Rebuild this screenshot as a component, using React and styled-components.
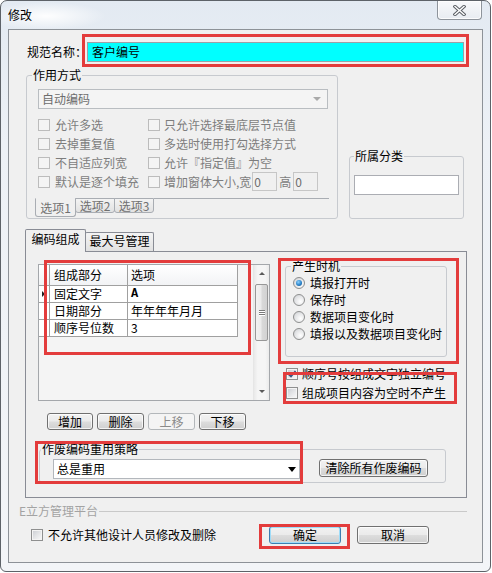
import React from "react";
import styled, { createGlobalStyle } from "styled-components";

const FONT = `"Noto Sans CJK SC", "Noto Sans", "DejaVu Sans", sans-serif`;

const GlobalStyle = createGlobalStyle`
  *, *::before, *::after { box-sizing: border-box; }
  html, body { margin: 0; padding: 0; background: #ffffff; }
  body { font-family: ${FONT}; font-size: 12px; line-height: 14px; color: #000; }
`;

const Window = styled.div`
  position: relative;
  width: 491px;
  height: 572px;
  border: 1px solid #5d6268;
  border-radius: 7px 7px 6px 6px;
  background:
    radial-gradient(ellipse 60px 14px at 45px 15px, rgba(255,255,255,0.95), rgba(255,255,255,0) 100%),
    linear-gradient(180deg, #e3eaf2 0%, #edf1f6 25%, #f3f5f8 100%);
  padding: 0 7px;
  display: flex;
  flex-direction: column;
  overflow: hidden;
`;

const TitleBar = styled.div`
  height: 28px;
  flex: none;
  display: flex;
  justify-content: space-between;
  align-items: flex-start;
`;

const Title = styled.div`
  padding-top: 7px;
  line-height: 14px;
  font-size: 12px;
  color: #000;
`;

const CloseBtn = styled.div`
  width: 45px;
  height: 19px;
  margin-right: 1px;
  border: 1px solid #8e949b;
  border-top: none;
  border-radius: 0 0 4px 4px;
  background: linear-gradient(180deg, #f8f9fb, #e8ecf1);
  box-shadow: inset 0 0 0 1px rgba(255,255,255,0.8);
  display: flex;
  align-items: center;
  justify-content: center;
`;

const Client = styled.div`
  height: 534px;
  flex: none;
  border: 1px solid #8d9298;
  background: #f0f0f0;
  display: flex;
  flex-direction: column;
`;

const NameRow = styled.div`
  display: flex;
  align-items: center;
  height: 20px;
  margin: 12px 0 0 18px;
`;

const FieldLabel = styled.span`
  width: 60px;
  flex: none;
  white-space: nowrap;
`;

const NameInput = styled.div`
  width: 377px;
  height: 20px;
  flex: none;
  background: #00ffff;
  border: 1px solid #9aa0a6;
  padding: 2px 4px;
  line-height: 14px;
`;

const TopRow = styled.div`
  display: flex;
  align-items: flex-end;
  margin: 6px 0 0 17px;
`;

const Group = styled.fieldset`
  margin: 0;
  min-width: 0;
  flex: none;
  width: ${(p) => p.$w}px;
  border: 1px solid #c7cacf;
  border-radius: 3px;
  padding: ${(p) => p.$pad};
`;

const CategoryGroup = styled(Group)`
  margin-left: 11px;
`;

const PolicyGroup = styled(Group)`
  margin: 12px 0 0 1px;
`;

const Legend = styled.legend`
  padding: 0 1px;
  margin-left: ${(p) => p.$ml}px;
  font-size: 12px;
  line-height: 14px;
  color: #000;
`;

const Combo = styled.div`
  width: ${(p) => p.$w}px;
  height: 20px;
  flex: none;
  display: flex;
  align-items: center;
  justify-content: space-between;
  padding: 0 ${(p) => (p.$disabled ? 6 : 3)}px 0 3px;
  border: 1px solid ${(p) => (p.$disabled ? "#b9bdc1" : "#b3b7bc")};
  background: ${(p) => (p.$disabled ? "#f4f4f4" : "#ffffff")};
  color: ${(p) => (p.$disabled ? "#6d6d6d" : "#000")};
  white-space: nowrap;
`;

const ComboArrow = styled.span`
  width: 0;
  height: 0;
  border-left: 4px solid transparent;
  border-right: 4px solid transparent;
  border-top: ${(p) => (p.$disabled ? "4px solid #a9a9a9" : "5px solid #000")};
`;

const CheckGrid = styled.div`
  display: grid;
  grid-template-columns: 110px auto;
  grid-auto-rows: 19px;
  margin-top: 6px;
`;

const CheckItem = styled.div`
  display: flex;
  align-items: center;
  height: ${(p) => p.$h || 19}px;
  gap: ${(p) => p.$gap ?? 5}px;
  margin-left: ${(p) => p.$ml || 0}px;
  white-space: nowrap;
  color: ${(p) => (p.$disabled ? "#7d7d7d" : "#000")};
`;

const Box = styled.span`
  width: 12px;
  height: 12px;
  flex: none;
  display: flex;
  align-items: center;
  justify-content: center;
  border: 1px solid ${(p) => (p.$disabled ? "#bcbcbc" : "#8e8f8f")};
  background: ${(p) =>
    p.$disabled
      ? "#f4f4f4"
      : "linear-gradient(135deg, #c9ccd1 0%, #e6e7e9 55%, #fafafa 100%)"};
  box-shadow: ${(p) => (p.$disabled ? "none" : "inset 0 0 0 1px #f4f4f4")};
`;

const MiniInput = styled.span`
  width: 25px;
  height: 19px;
  flex: none;
  margin-left: 1px;
  border: 1px solid #c6c6c6;
  background: #f0f0f0;
  padding: 2px 1px;
  line-height: 14px;
  color: #6d6d6d;
`;

const SizeText = styled.span`
  display: flex;
  align-items: center;
`;

const HighLabel = styled.span`
  margin: 0 1px 0 2px;
`;

const BottomTabStrip = styled.div`
  display: flex;
  align-items: flex-start;
  width: 294px;
  height: 19px;
  margin: 7px 0 0 -3px;
`;

const BottomTab = styled.span`
  width: ${(p) => p.$w}px;
  height: ${(p) => (p.$active ? 19 : 15)}px;
  flex: none;
  margin-left: ${(p) => (p.$first ? 0 : -1)}px;
  border: 1px solid #a9adb3;
  border-top-color: ${(p) => (p.$active ? "transparent" : "#a9adb3")};
  border-radius: 0 0 3px 3px;
  background: ${(p) => (p.$active ? "#f0f0f0" : "linear-gradient(180deg, #f3f3f3, #e2e2e2)")};
  color: #707070;
  display: flex;
  align-items: ${(p) => (p.$active ? "center" : "flex-start")};
  justify-content: center;
  line-height: 13px;
`;

const StripLine = styled.span`
  flex: 1;
  border-top: 1px solid #a9adb3;
`;

const CategoryInput = styled.div`
  width: 105px;
  height: 20px;
  border: 1px solid #abadb3;
  background: #fff;
`;

const TabBox = styled.div`
  width: 442px;
  margin: 10px 0 0 16px;
  display: flex;
  flex-direction: column;
`;

const TabHeads = styled.div`
  display: flex;
  align-items: flex-end;
  height: 22px;
  position: relative;
  z-index: 1;
`;

const TopTab = styled.div`
  width: ${(p) => p.$w}px;
  height: ${(p) => (p.$active ? 23 : 19)}px;
  flex: none;
  margin-bottom: ${(p) => (p.$active ? -1 : 0)}px;
  margin-left: ${(p) => (p.$active ? 0 : -1)}px;
  padding-top: ${(p) => (p.$active ? 2 : 1)}px;
  border: 1px solid #898c95;
  border-bottom: none;
  border-radius: 2px 2px 0 0;
  background: ${(p) => (p.$active ? "#f0f0f0" : "linear-gradient(180deg, #f4f4f4, #e1e1e1)")};
  text-align: center;
  line-height: 14px;
  white-space: nowrap;
`;

const TabPanel = styled.div`
  height: 247px;
  border: 1px solid #898c95;
  background: #f0f0f0;
  padding: 7px 0 0 12px;
  display: flex;
  flex-direction: column;
`;

const PanelTop = styled.div`
  display: flex;
  align-items: flex-start;
`;

const LeftCol = styled.div`
  width: 232px;
  flex: none;
  margin-top: 5px;
  display: flex;
  flex-direction: column;
`;

const GridBox = styled.div`
  width: 232px;
  height: 137px;
  border: 1px solid #a4a7ab;
  display: flex;
`;

const TableArea = styled.div`
  flex: 1;
  background: #f4f4f4;
`;

const Table = styled.div`
  display: grid;
  grid-template-columns: 11px 78px 110px;
  grid-template-rows: 21px 17px 17px 17px;
  width: 199px;
`;

const HeadCell = styled.div`
  display: flex;
  align-items: center;
  padding-left: ${(p) => p.$pl ?? 4}px;
  background: linear-gradient(180deg, #ffffff, #f2f3f5);
  border-right: 1px solid #a0a0a0;
  border-bottom: 1px solid #a0a0a0;
  white-space: nowrap;
`;

const Cell = styled.div`
  display: flex;
  align-items: center;
  padding-left: ${(p) => p.$pl ?? 4}px;
  background: #ffffff;
  border-right: 1px solid #a0a0a0;
  border-bottom: 1px solid #a0a0a0;
  white-space: nowrap;
  overflow: hidden;
  font-family: ${(p) => (p.$mono ? `"Liberation Mono", monospace` : FONT)};
  font-weight: ${(p) => (p.$mono ? 700 : 400)};
`;

const RowHead = styled.div`
  display: flex;
  align-items: center;
  padding-left: 3px;
  background: #ffffff;
  border-right: 1px solid #a0a0a0;
  border-bottom: 1px solid #a0a0a0;
`;

const RowMarker = styled.span`
  width: 0;
  height: 0;
  border-top: 3px solid transparent;
  border-bottom: 3px solid transparent;
  border-left: 3px solid #222;
`;

const VScroll = styled.div`
  width: 16px;
  flex: none;
  display: flex;
  flex-direction: column;
  border-left: 1px solid #e6e6e6;
  background: linear-gradient(90deg, #e9e9e9, #f5f5f5 25%, #f5f5f5 75%, #ebebeb);
`;

const ScrollArrow = styled.div`
  height: 17px;
  flex: none;
  display: flex;
  align-items: center;
  justify-content: center;
  margin-top: ${(p) => (p.$bottom ? "auto" : 0)};
`;

const ArrowGlyph = styled.span`
  width: 0;
  height: 0;
  border-left: 3px solid transparent;
  border-right: 3px solid transparent;
  ${(p) => (p.$down ? "border-top: 3px solid #5a5a5a;" : "border-bottom: 3px solid #5a5a5a;")}
`;

const Thumb = styled.div`
  height: 57px;
  margin: 2px 1px 0 1px;
  border: 1px solid #979797;
  border-radius: 2px;
  background: linear-gradient(90deg, #f2f2f2, #ebebeb 45%, #d9d9d9 55%, #d2d2d2);
  display: flex;
  flex-direction: column;
  align-items: center;
  justify-content: center;
  gap: 1px;
`;

const Grip = styled.span`
  width: 6px;
  height: 1px;
  background: #7a7a7a;
  box-shadow: 0 1px 0 #fff;
`;

const ButtonRow = styled.div`
  display: flex;
  gap: 4px;
  margin: 12px 0 0 9px;
`;

const Btn = styled.button`
  font-family: ${FONT};
  font-size: 12px;
  line-height: 14px;
  padding: 0;
  width: ${(p) => p.$w}px;
  height: ${(p) => p.$h}px;
  flex: none;
  border: 1px solid ${(p) => (p.$disabled ? "#b3b7ba" : p.$focus ? "#3c7fb1" : "#707070")};
  border-radius: 3px;
  background: ${(p) =>
    p.$disabled
      ? "#f4f4f4"
      : "linear-gradient(180deg, #f2f2f2 0%, #ebebeb 48%, #dddddd 52%, #cfcfcf 100%)"};
  box-shadow: ${(p) =>
    p.$focus
      ? "inset 0 0 0 1px #9fdcf8"
      : p.$disabled
      ? "none"
      : "inset 0 0 0 1px rgba(255,255,255,0.75)"};
  color: ${(p) => (p.$disabled ? "#8a8a8a" : "#000")};
  white-space: nowrap;
`;

const RightCol = styled.div`
  width: 162px;
  flex: none;
  margin-left: 15px;
  display: flex;
  flex-direction: column;
`;

const RadioItem = styled.div`
  display: flex;
  align-items: center;
  gap: 5px;
  height: 17px;
  white-space: nowrap;
`;

const Radio = styled.span`
  width: 12px;
  height: 12px;
  flex: none;
  border-radius: 50%;
  border: 1px solid #8e8f8f;
  background: radial-gradient(circle at 65% 65%, #ffffff 0%, #e4e5e7 55%, #c8cbcf 100%);
  display: flex;
  align-items: center;
  justify-content: center;
`;

const RadioDot = styled.span`
  width: 6px;
  height: 6px;
  border-radius: 50%;
  background: radial-gradient(circle at 40% 35%, #8cd1ff 0%, #2a82c8 55%, #0c4a86 100%);
`;

const CheckStack = styled.div`
  margin-top: 7px;
  display: flex;
  flex-direction: column;
`;

const PolicyRow = styled.div`
  display: flex;
  align-items: flex-start;
  gap: 19px;
`;

const SepRow = styled.div`
  display: flex;
  align-items: center;
  height: 14px;
  margin: 6px 15px 0 10px;
  color: #a3a3a3;
  white-space: nowrap;
`;

const SepLine = styled.span`
  flex: 1;
  height: 1px;
  margin-left: 1px;
  background: #c9c9c9;
`;

const FooterRow = styled.div`
  display: flex;
  align-items: center;
  height: 18px;
  margin-top: 8px;
  padding-left: 22px;
`;

const FooterButtons = styled.div`
  display: flex;
  gap: 16px;
  margin: 0 53px 0 auto;
`;

const Mark = styled.div`
  position: absolute;
  left: ${(p) => p.$x - 1}px;
  top: ${(p) => p.$y - 1}px;
  width: ${(p) => p.$w}px;
  height: ${(p) => p.$h}px;
  border: 3px solid #e33c3c;
  pointer-events: none;
`;

const CheckMark = () => (
  <svg width="10" height="10" viewBox="0 0 10 10">
    <path d="M1.5 5 L4 7.5 L8.5 2" fill="none" stroke="#3b5582" strokeWidth="1.8" />
  </svg>
);

const Check = ({ label, disabled, checked, gap, ml, h }) => (
  <CheckItem $disabled={disabled} $gap={gap} $ml={ml} $h={h}>
    <Box $disabled={disabled}>{checked && <CheckMark />}</Box>
    <span>{label}</span>
  </CheckItem>
);

const CloseX = () => (
  <svg width="13" height="11" viewBox="0 0 13 11">
    <path d="M2 1.5 L11 9.5 M11 1.5 L2 9.5" stroke="#5d6167" strokeWidth="3.4" strokeLinecap="square" />
    <path d="M2 1.5 L11 9.5 M11 1.5 L2 9.5" stroke="#ffffff" strokeWidth="1.4" strokeLinecap="square" />
  </svg>
);

const rows = [
  { a: "固定文字", b: "A", mono: true, marker: true },
  { a: "日期部分", b: "年年年年月月" },
  { a: "顺序号位数", b: "3" },
];

export default function App() {
  return (
    <>
      <GlobalStyle />
      <Window>
        <TitleBar>
          <Title>修改</Title>
          <CloseBtn>
            <CloseX />
          </CloseBtn>
        </TitleBar>
        <Client>
          <NameRow>
            <FieldLabel>规范名称：</FieldLabel>
            <NameInput>客户编号</NameInput>
          </NameRow>

          <TopRow>
            <Group $w={312} $pad="7px 8px 1px 11px">
              <Legend $ml={-6}>作用方式</Legend>
              <Combo $w={290} $disabled>
                <span>自动编码</span>
                <ComboArrow $disabled />
              </Combo>
              <CheckGrid>
                <Check disabled label="允许多选" />
                <Check disabled label="只允许选择最底层节点值" gap={4} />
                <Check disabled label="去掉重复值" />
                <Check disabled label="多选时使用打勾选择方式" gap={4} />
                <Check disabled label="不自适应列宽" />
                <Check disabled label="允许『指定值』为空" gap={4} />
                <Check disabled label="默认是逐个填充" />
                <CheckItem $disabled $gap={4}>
                  <Box $disabled />
                  <SizeText>
                    增加窗体大小,宽
                    <MiniInput>0</MiniInput>
                    <HighLabel>高</HighLabel>
                    <MiniInput>0</MiniInput>
                  </SizeText>
                </CheckItem>
              </CheckGrid>
              <BottomTabStrip>
                <BottomTab $w={41} $active $first>选项1</BottomTab>
                <BottomTab $w={40}>选项2</BottomTab>
                <BottomTab $w={40}>选项3</BottomTab>
                <StripLine />
              </BottomTabStrip>
            </Group>

            <CategoryGroup $w={115} $pad="12px 4px 23px 4px">
              <Legend $ml={0}>所属分类</Legend>
              <CategoryInput />
            </CategoryGroup>
          </TopRow>

          <TabBox>
            <TabHeads>
              <TopTab $w={61} $active>编码组成</TopTab>
              <TopTab $w={69}>最大号管理</TopTab>
            </TabHeads>
            <TabPanel>
              <PanelTop>
                <LeftCol>
                  <GridBox>
                    <TableArea>
                      <Table>
                        <HeadCell $pl={0} />
                        <HeadCell>组成部分</HeadCell>
                        <HeadCell $pl={3}>选项</HeadCell>
                        {rows.map((r) => (
                          <React.Fragment key={r.a}>
                            <RowHead>{r.marker && <RowMarker />}</RowHead>
                            <Cell>{r.a}</Cell>
                            <Cell $pl={3} $mono={r.mono}>
                              {r.b}
                            </Cell>
                          </React.Fragment>
                        ))}
                      </Table>
                    </TableArea>
                    <VScroll>
                      <ScrollArrow>
                        <ArrowGlyph />
                      </ScrollArrow>
                      <Thumb>
                        <Grip />
                        <Grip />
                        <Grip />
                      </Thumb>
                      <ScrollArrow $bottom>
                        <ArrowGlyph $down />
                      </ScrollArrow>
                    </VScroll>
                  </GridBox>
                  <ButtonRow>
                    <Btn $w={46} $h={17}>增加</Btn>
                    <Btn $w={47} $h={17}>删除</Btn>
                    <Btn $w={47} $h={17} $disabled>上移</Btn>
                    <Btn $w={47} $h={17}>下移</Btn>
                  </ButtonRow>
                </LeftCol>

                <RightCol>
                  <Group $w={162} $pad="1px 0 14px 7px">
                    <Legend $ml={-2}>产生时机</Legend>
                    <RadioItem>
                      <Radio>
                        <RadioDot />
                      </Radio>
                      填报打开时
                    </RadioItem>
                    <RadioItem>
                      <Radio />
                      保存时
                    </RadioItem>
                    <RadioItem>
                      <Radio />
                      数据项目变化时
                    </RadioItem>
                    <RadioItem>
                      <Radio />
                      填报以及数据项目变化时
                    </RadioItem>
                  </Group>
                  <CheckStack>
                    <Check checked label="顺序号按组成文字独立编号" gap={4} ml={1} />
                    <Check label="组成项目内容为空时不产生" gap={4} ml={1} />
                  </CheckStack>
                </RightCol>
              </PanelTop>

              <PolicyGroup $w={407} $pad="3px 0 3px 13px">
                <Legend $ml={-12}>作废编码重用策略</Legend>
                <PolicyRow>
                  <Combo $w={247}>
                    <span>总是重用</span>
                    <ComboArrow />
                  </Combo>
                  <Btn $w={109} $h={18}>清除所有作废编码</Btn>
                </PolicyRow>
              </PolicyGroup>
            </TabPanel>
          </TabBox>

          <SepRow>
            E立方管理平台
            <SepLine />
          </SepRow>

          <FooterRow>
            <Check label="不允许其他设计人员修改及删除" gap={5} h={18} />
            <FooterButtons>
              <Btn $w={72} $h={18} $focus>确定</Btn>
              <Btn $w={72} $h={18}>取消</Btn>
            </FooterButtons>
          </FooterRow>
        </Client>

        <Mark $x={82} $y={34} $w={387} $h={33} />
        <Mark $x={44} $y={260} $w={207} $h={95} />
        <Mark $x={278} $y={258} $w={181} $h={106} />
        <Mark $x={283} $y={372} $w={174} $h={32} />
        <Mark $x={35} $y={441} $w={268} $h={43} />
        <Mark $x={259} $y={524} $w={91} $h={25} />
      </Window>
    </>
  );
}
